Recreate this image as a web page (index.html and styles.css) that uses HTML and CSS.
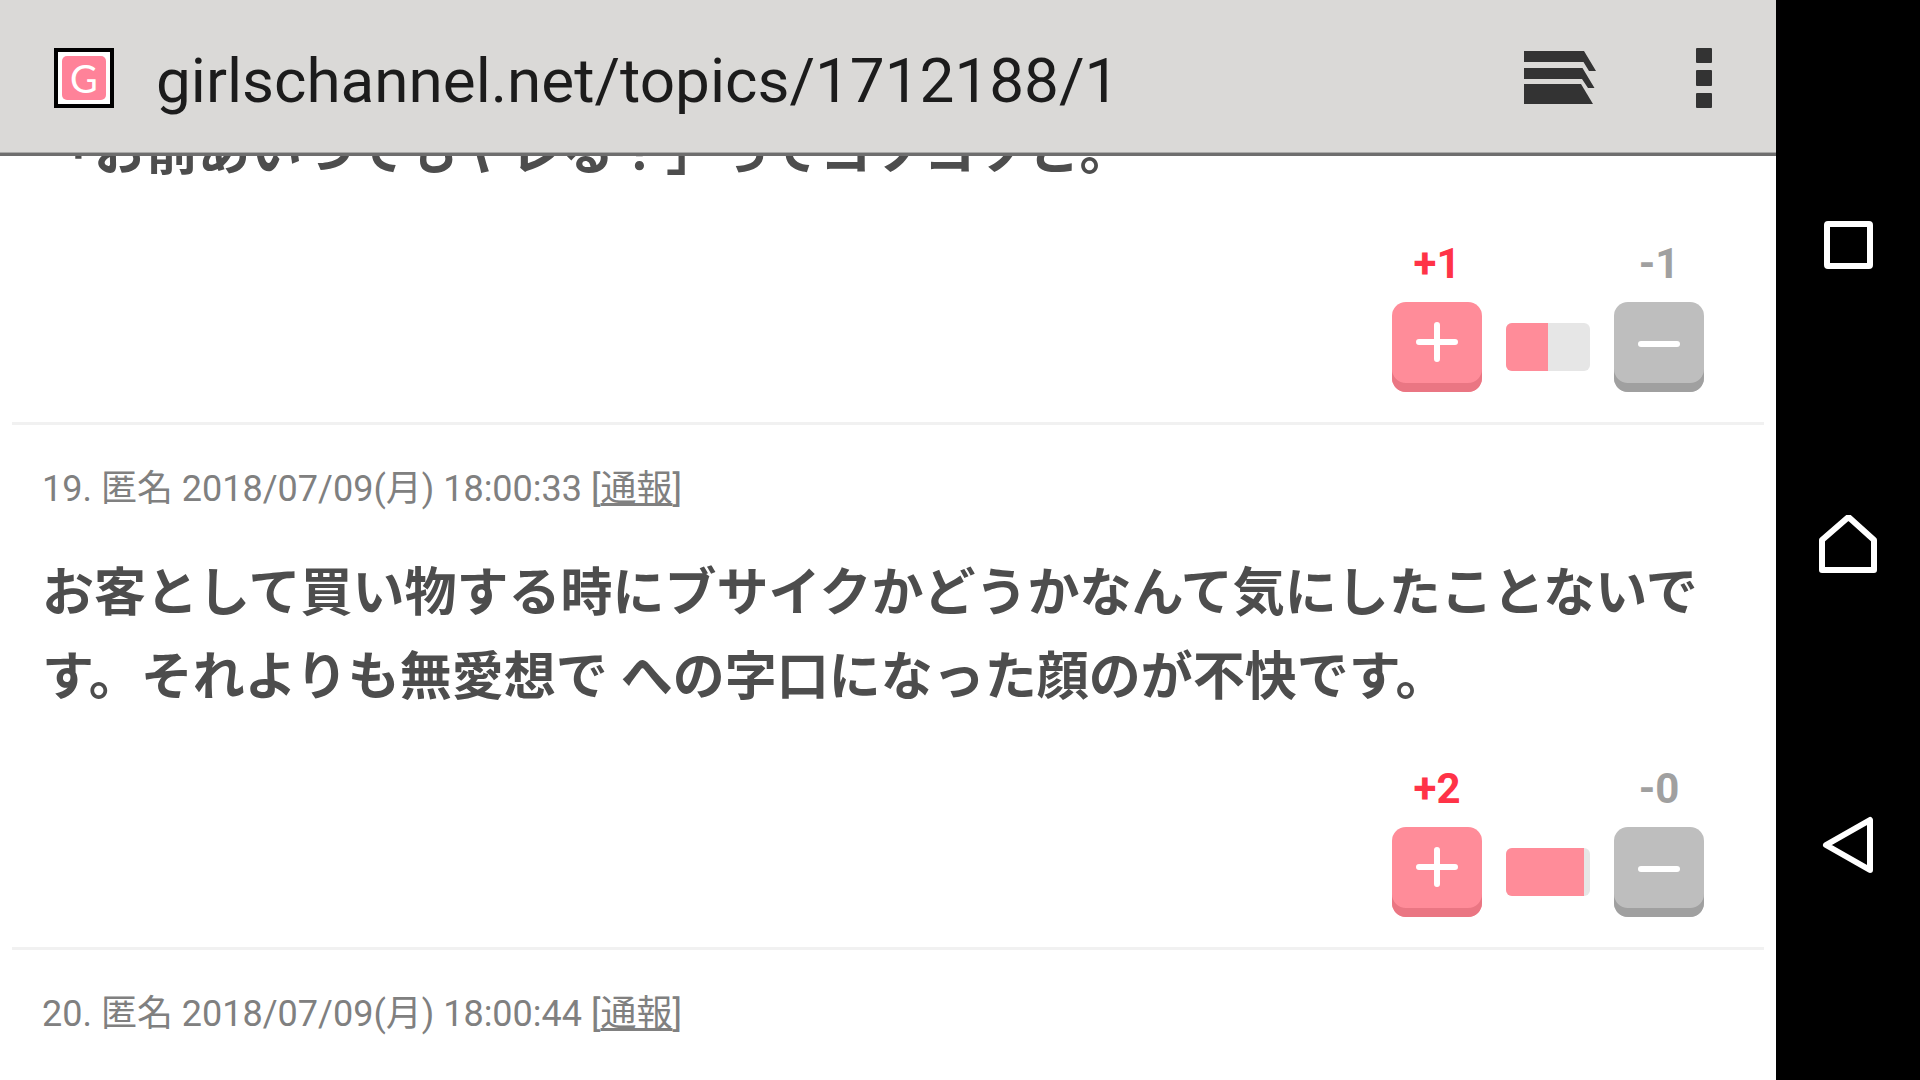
FILE: index.html
```html
<!DOCTYPE html>
<html lang="ja">
<head>
    <meta charset="UTF-8">
    <meta name="viewport" content="width=device-width, initial-scale=1.0">
    <title>ガールズちゃんねる</title>
    <link rel="stylesheet" href="styles.css">
</head>
<body>
    <div class="browser">
        <header class="toolbar">
            <div class="favicon"><span>G</span></div>
            <input class="url" type="text" value="girlschannel.net/topics/1712188/1" aria-label="URL" spellcheck="false">
            <button class="tool-btn" type="button" aria-label="タブ">
                <svg width="72" height="54" viewBox="0 0 72 54" fill="#333">
                    <path d="M0 0H60L72 20H65L59.500 11H0Z"/>
                    <path d="M0 17H58.500L70.500 37H64L58 28H0Z"/>
                    <path d="M0 33H57L69 53H0Z"/>
                </svg>
            </button>
            <button class="tool-btn" type="button" aria-label="メニュー">
                <svg width="16" height="60" viewBox="0 0 16 60" fill="#333">
                    <rect y="0" width="16" height="15" rx="1"/>
                    <rect y="22" width="16" height="16" rx="1"/>
                    <rect y="45" width="16" height="15" rx="1"/>
                </svg>
            </button>
        </header>

        <main class="topic">
            <ul class="comments">
                <li class="comment comment-cut">
                    <p class="body">「お前あいつでもヤレる？」ってコソコソと。</p>
                    <div class="votes">
                        <span class="count plus">+1</span>
                        <span class="count minus">-1</span>
                        <button class="vote vote-plus" type="button" aria-label="プラス">
                            <svg width="42" height="42" viewBox="0 0 42 42"><path d="M3 20H39M21 3V37"/></svg>
                        </button>
                        <div class="ratio"><div class="ratio-fill" style="width: 50%"></div></div>
                        <button class="vote vote-minus" type="button" aria-label="マイナス">
                            <svg width="42" height="42" viewBox="0 0 42 42"><path d="M3 22H39"/></svg>
                        </button>
                    </div>
                </li>

                <li class="comment">
                    <p class="meta">19. 匿名 2018/07/09(月) 18:00:33 [<a href="#">通報</a>]</p>
                    <p class="body">お客として買い物する時にブサイクかどうかなんて気にしたことないです。それよりも無愛想で への字口になった顔のが不快です。</p>
                    <div class="votes">
                        <span class="count plus">+2</span>
                        <span class="count minus">-0</span>
                        <button class="vote vote-plus" type="button" aria-label="プラス">
                            <svg width="42" height="42" viewBox="0 0 42 42"><path d="M3 20H39M21 3V37"/></svg>
                        </button>
                        <div class="ratio"><div class="ratio-fill" style="width: 93%"></div></div>
                        <button class="vote vote-minus" type="button" aria-label="マイナス">
                            <svg width="42" height="42" viewBox="0 0 42 42"><path d="M3 22H39"/></svg>
                        </button>
                    </div>
                </li>

                <li class="comment">
                    <p class="meta">20. 匿名 2018/07/09(月) 18:00:44 [<a href="#">通報</a>]</p>
                </li>
            </ul>
        </main>
    </div>

    <nav class="navbar">
        <button type="button" aria-label="履歴">
            <svg width="60" height="60" viewBox="0 0 60 60"><rect x="9" y="9" width="43" height="42" rx="1"/></svg>
        </button>
        <button type="button" aria-label="ホーム">
            <svg width="60" height="60" viewBox="0 0 60 60"><path d="M4 55V25L30.500 2L56 25V55Z"/></svg>
        </button>
        <button type="button" aria-label="戻る">
            <svg width="60" height="60" viewBox="0 0 60 60"><path d="M8 30L52 5V55Z"/></svg>
        </button>
    </nav>
</body>
</html>
```

FILE: styles.css
```css
* {
    box-sizing: border-box;
}

body {
    margin: 0;
    height: 100vh;
    display: flex;
    overflow: hidden;
    background: #000;
    font-family: Roboto, "Noto Sans CJK JP", sans-serif;
}

button {
    padding: 0;
    border: none;
    background: none;
    cursor: pointer;
}

svg {
    display: block;
}

.browser {
    flex: 1;
    min-width: 0;
    display: flex;
    flex-direction: column;
    background: #fff;
}

/* アドレスバー */
.toolbar {
    flex: none;
    height: 156px;
    display: flex;
    align-items: center;
    padding: 3px 64px 0 54px;
    background: #dad9d7;
    border-bottom: 3px solid #6e6e6e;
    box-shadow: inset 0 -1px #a9a9a8;
}

.favicon {
    flex: none;
    width: 60px;
    height: 60px;
    padding: 4px;
    border: 4px solid #000;
    background: #fff;
}

.favicon span {
    display: block;
    border-radius: 5px;
    background: #ff8299;
    color: #fff;
    font-family: Lato, sans-serif;
    font-size: 38px;
    line-height: 44px;
    text-align: center;
}

.url {
    flex: 1;
    min-width: 0;
    margin-left: 42px;
    padding: 4px 0 0;
    border: none;
    outline: none;
    background: none;
    color: #1c1c1c;
    font-family: inherit;
    font-size: 62px;
}

.tool-btn {
    margin-left: 100px;
}

/* コメント一覧 */
.topic {
    flex: 1;
    min-height: 0;
    overflow: hidden;
    padding: 0 12px;
}

.comments {
    margin: 0;
    padding: 0;
    list-style: none;
}

.comment {
    padding: 37px 30px 30px;
    border-bottom: 3px solid #f1f1f1;
}

/* スクロールで上が隠れているコメント */
.comment-cut {
    margin-top: -82px;
}

.meta {
    margin: 0 0 36px;
    color: #808080;
    font-size: 36px;
    line-height: 54px;
}

.meta a {
    color: inherit;
}

.body {
    margin: 0 0 44px;
    color: #4d4d4d;
    font-size: 52px;
    font-weight: bold;
    line-height: 84px;
}

.votes {
    display: grid;
    grid-template-columns: 90px 84px 90px;
    column-gap: 24px;
    row-gap: 13px;
    justify-content: end;
    align-items: center;
    padding-right: 30px;
}

.count {
    font-size: 42px;
    font-weight: bold;
    line-height: 50px;
    text-align: center;
}

.count.plus {
    color: #ff3347;
}

.count.minus {
    grid-column: 3;
    color: #a0a0a0;
}

.vote {
    height: 90px;
    padding-bottom: 9px;
    border-radius: 14px;
    display: flex;
    align-items: center;
    justify-content: center;
}

.vote svg {
    fill: none;
    stroke: #fff;
    stroke-width: 6;
    stroke-linecap: round;
}

.vote-plus {
    background: #ff8c99;
    box-shadow: inset 0 -9px #ea7683;
}

.vote-minus {
    background: #bebebe;
    box-shadow: inset 0 -9px #a0a0a0;
}

.ratio {
    height: 48px;
    border-radius: 6px;
    overflow: hidden;
    background: #e6e6e6;
}

.ratio-fill {
    height: 100%;
    background: #ff8c99;
}

/* 端末のナビゲーション */
.navbar {
    flex: none;
    width: 144px;
    display: flex;
    flex-direction: column;
    justify-content: center;
    padding-top: 10px;
}

.navbar button {
    flex: 0 1 300px;
    display: flex;
    align-items: center;
    justify-content: center;
}

.navbar svg {
    fill: none;
    stroke: #fff;
    stroke-width: 6;
    stroke-linejoin: round;
}
```
